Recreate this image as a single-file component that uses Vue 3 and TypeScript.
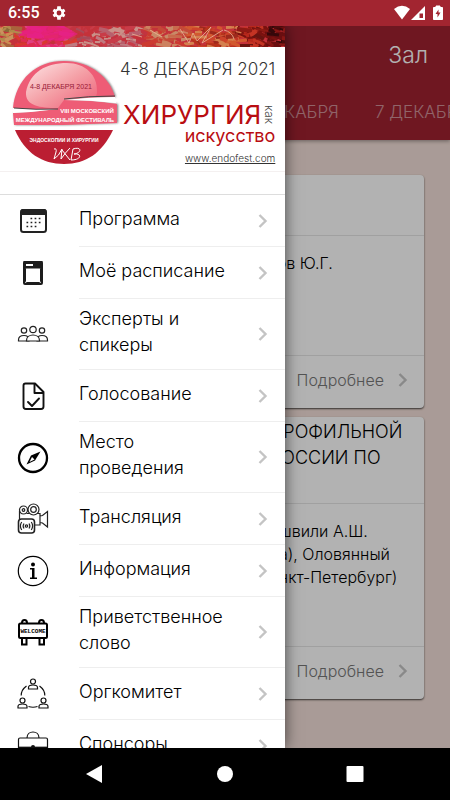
<script setup lang="ts">
interface MenuItem {
  title: string[]
  icon: string
}

interface Session {
  heading: string[]
  speakers: string[]
}

const menu: MenuItem[] = [
  {
    title: ['Программа'],
    icon: `<rect x="4" y="5" width="25" height="22" rx="2.5" fill="#fff" stroke="#222" stroke-width="2"/><path d="M3.500 5.500q0-1.500 2-1.500h22q2 0 2 1.500V10h-26z" fill="#222"/><path d="M13.500 13.500h11M9.500 17.500h15M9.500 21.500h11" stroke="#222" stroke-width="1.700" stroke-dasharray="1.700 2.400" fill="none"/>`,
  },
  {
    title: ['Моё расписание'],
    icon: `<rect x="7" y="5" width="18" height="22" rx="1" fill="#fff" stroke="#1c1c1c" stroke-width="2"/><path d="M6.500 4h19v8.500h-19z" fill="#1c1c1c"/><path d="M9 7h7v2H9z" fill="#fff"/><rect x="8.500" y="11" width="15" height="14.500" rx="1" fill="#fff" stroke="#1c1c1c"/>`,
  },
  {
    title: ['Эксперты и', 'спикеры'],
    icon: `<g fill="#fff" stroke="#222" stroke-width="1.200"><circle cx="7" cy="11.500" r="2.700"/><circle cx="25" cy="11.500" r="2.700"/><path d="M1.500 22v-1c0-3 2.500-4.500 5.500-4.500s5 1.500 5 4.500v1zM20 22v-1c0-3 2-4.500 5-4.500s5.500 1.500 5.500 4.500v1z"/><circle cx="16" cy="10.500" r="3.200"/><path d="M9.500 22v-.5c0-3.500 3-5.500 6.500-5.500s6.500 2 6.500 5.500v.5z"/></g>`,
  },
  {
    title: ['Голосование'],
    icon: `<g fill="none" stroke="#111" stroke-width="1.900" stroke-linejoin="round" stroke-linecap="round"><path d="M8.500 3.500H18l8.500 8.500v14.500a2.500 2.500 0 0 1-2.500 2.500H9a2.500 2.500 0 0 1-2.500-2.500v-21a2 2 0 0 1 2-2z"/><path d="M17.500 4v9H26M11 22l4 4 7-7.500"/></g>`,
  },
  {
    title: ['Место', 'проведения'],
    icon: `<circle cx="16" cy="16" r="14" fill="#fff" stroke="#000" stroke-width="2.300"/><path d="M23.500 9.500 18 18.500 9.500 22.500 14 13.500z" fill="#000"/><path d="m15 15 2.500 2.500-5 2.500z" fill="#fff"/>`,
  },
  {
    title: ['Трансляция'],
    icon: `<g fill="none" stroke="#222" stroke-width="1.200"><circle cx="6.500" cy="7" r="4"/><circle cx="6.500" cy="7" r="1.300"/><circle cx="16.500" cy="6.500" r="5.500"/><circle cx="16.500" cy="6.500" r="2.800"/><path d="M2.500 8v8M9.500 10.500h3M20 10.500h3V22h-5M23 13l2.500-.5 5-4V24l-5-4-2.500-.5"/><rect x="1.500" y="16" width="16" height="14" rx="3" fill="#fff" stroke-width="1.600"/><circle cx="9.500" cy="23" r="1.200"/><path d="M7 20.500q-1.700 2.500 0 5M12 20.500q1.700 2.500 0 5M4.700 19q-2.600 4 0 8M14.300 19q2.600 4 0 8"/></g>`,
  },
  {
    title: ['Информация'],
    icon: `<circle cx="16" cy="16" r="14.700" fill="#fff" stroke="#000" stroke-width="1.200"/><circle cx="16" cy="9.500" r="2" fill="#000"/><path d="M13 13h4.500v9.500H20V24h-7v-1.500h2V14.500h-2z" fill="#000"/>`,
  },
  {
    title: ['Приветственное', 'слово'],
    icon: `<g fill="none" stroke="#000" stroke-width="2"><path d="M5 6c0-4 5-4 5 0M22 6c0-4 5-4 5 0" /><rect x="2" y="6.500" width="28" height="14.500" rx="1.500"/><path d="M5 21v6.500h4.500V21M22.500 21v6.500H27V21"/></g><text x="16" y="16" font-size="6" font-weight="bold" font-family="Liberation Mono, monospace" text-anchor="middle" fill="#000">WELCOME</text>`,
  },
  {
    title: ['Оргкомитет'],
    icon: `<g fill="none" stroke="#111" stroke-width="1.200"><circle cx="16" cy="3.500" r="2.500"/><path d="M11.500 11V9.500c0-2 2-2.500 4.500-2.500s4.500.5 4.500 2.500V11z"/><circle cx="5.500" cy="22.500" r="2.500"/><path d="M1 30v-1.500C1 26.500 3 26 5.500 26s4.500.5 4.500 2.500V30z"/><circle cx="26.500" cy="22.500" r="2.500"/><path d="M22 30v-1.500c0-2 2-2.500 4.500-2.500s4.500.5 4.500 2.500V30z"/><path d="M9.500 8C6 10.500 4.200 14 4.200 17.500M22.500 8c3.500 2.500 5.300 6 5.300 9.500M11.500 28.500q4.500 1.500 9 0"/></g>`,
  },
  {
    title: ['Спонсоры'],
    icon: `<g fill="none" stroke="#111" stroke-width="1.200"><path d="M10 8c0-8 12-8 12 0"/><rect x="1.500" y="8" width="29" height="20" rx="1.500"/><path d="M1.500 17.500h29" stroke-width="1.700"/></g><circle cx="16" cy="17" r="2" fill="#111"/>`,
  },
]

const sessions: Session[] = [
  { heading: [], speakers: ['тов Ю.Г.'] },
  {
    heading: ['ПРОФИЛЬНОЙ', 'РОССИИ ПО'],
    speakers: ['ашвили А.Ш.', 'ва), Оловянный', 'анкт-Петербург)'],
  },
]

const days: string[] = ['6 ДЕКАБРЯ', '7 ДЕКАБРЯ']

interface Stroke {
  d: string
  color: string
  width: number
}

// Brush strokes of the painted strip: each zone has its own palette.
const zones: { until: number; colors: string[] }[] = [
  { until: 20, colors: ['#b08a4c', '#8a6a38', '#c9935e', '#a8643c', '#d08a50'] },
  { until: 70, colors: ['#e22a80', '#e22a6a', '#dd2c50', '#d8392f', '#e04080'] },
  { until: 145, colors: ['#b8606c', '#c07a80', '#c83c48', '#a84a58', '#c99088', '#c23440'] },
  { until: 190, colors: ['#c86a4c', '#cd8260', '#c44a38', '#c88a68', '#cc3a30'] },
  { until: 240, colors: ['#cc432a', '#d2592f', '#b8331c', '#d4814f', '#9e2a1c'] },
  { until: 270, colors: ['#8e1a14', '#b8281c', '#6a1410', '#c43424', '#7a120f'] },
  { until: 286, colors: ['#4a0c0c', '#8a1614', '#35080a', '#6a0e10'] },
]

function paint(): Stroke[] {
  const result: Stroke[] = []
  let seed = 17
  const next = (): number => {
    seed = (seed * 16807) % 2147483647
    return seed / 2147483647
  }
  for (let i = 0; i < 420; i++) {
    const x = Math.round(next() * 290)
    const y = Math.round(next() * 22)
    const zone = zones.find((z) => x < z.until) ?? zones[zones.length - 1]
    const color = zone.colors[Math.floor(next() * zone.colors.length)]
    const dx = Math.round(4 + next() * 11)
    const dy = Math.round((next() - 0.45) * 12)
    result.push({
      d: `M${x - 6} ${y}q${Math.round(dx / 2)} ${Math.round(dy / 4)} ${dx} ${dy}`,
      color,
      width: 2 + Math.round(next() * 2),
    })
  }
  return result
}

const strokes = paint()
</script>

<template>
  <div class="screen">
    <header class="status">
      <span class="clock">6:55</span>
      <svg class="gear" viewBox="0 0 24 24" aria-hidden="true">
        <path fill="#fff" fill-rule="evenodd" d="M19.400 13c.1-.7.1-1.300 0-2l2.200-1.700-2.200-3.800-2.700 1.100-1.700-1L14.600 2H9.400L9 5.600l-1.700 1-2.700-1.100-2.200 3.800L4.600 11v2l-2.200 1.700 2.200 3.800 2.700-1.100 1.700 1 .4 3.600h5.200l.4-3.600 1.700-1 2.700 1.100 2.200-3.800zM12 15.600a3.600 3.600 0 1 1 0-7.200 3.600 3.600 0 0 1 0 7.200z" />
      </svg>
      <svg class="signals" viewBox="0 0 50 16" aria-hidden="true">
        <path d="M0 4q8-6.500 16 0L8 14.500z" fill="#fff" />
        <path d="M31 1v14H17z" fill="#fff" />
        <path d="M25.500 8.500h3.500V13h-3.500z" fill="#a22530" />
        <path d="M39.500 2.500h2.500V1h4v1.500h2.500v12h-9z" fill="#fff" stroke="#fff" stroke-linejoin="round" />
        <path d="M44.500 4.500v3h2l-3 5V9h-2z" fill="#a22530" />
      </svg>
    </header>

    <div class="stage">
      <main class="page">
        <div class="appbar">
          <h1 class="hall">Зал</h1>
          <div class="tabs">
            <button v-for="day in days" :key="day" type="button" class="tab">{{ day }}</button>
          </div>
        </div>
        <div class="sessions">
          <article v-for="(session, i) in sessions" :key="i" class="card">
            <h2 class="card-head">
              <span v-for="line in session.heading" :key="line">{{ line }}</span>
            </h2>
            <p class="card-body">
              <span v-for="line in session.speakers" :key="line">{{ line }}</span>
            </p>
            <a href="#" class="more">
              Подробнее
              <svg class="chevron" viewBox="0 0 10 16" aria-hidden="true"><path d="m1.500 2 6 6-6 6" /></svg>
            </a>
          </article>
        </div>
      </main>

      <div class="shade"></div>

      <aside class="drawer">
        <svg class="painting" viewBox="0 0 285 21" preserveAspectRatio="xMidYMid slice" aria-hidden="true">
          <rect width="285" height="21" fill="#c4323a" />
          <path v-for="(s, i) in strokes" :key="i" :d="s.d" :stroke="s.color" :stroke-width="s.width" fill="none" />
          <path d="M18 9 30 0h34l14 8-14 7-22-1z" fill="#e81e86" opacity=".7" />
          <path d="m180 3 9 14 4-10 4 8 14-14-9 16 21-13M224 4q8 2 10 9M132 8l10 3M150 4l12 7" stroke="#e8b898" opacity=".8" fill="none" />
        </svg>

        <div class="banner">
          <svg class="badge" viewBox="0 0 110 110" aria-hidden="true">
            <defs>
              <linearGradient id="badge-sheen" x1="0" y1="0" x2="1" y2="1">
                <stop offset="0" stop-color="#fff4f2" />
                <stop offset=".5" stop-color="#f5a8ac" />
                <stop offset="1" stop-color="#ee5c76" />
              </linearGradient>
              <filter id="badge-shadow" x="-10%" y="-10%" width="120%" height="120%">
                <feDropShadow dx="1" dy="0" stdDeviation="1" flood-color="#555" flood-opacity=".8" />
              </filter>
            </defs>
            <g filter="url(#badge-shadow)">
              <path d="M3 50C6 21 26 3 54 3c27 0 46 17 51 36q-25 0-51 3l20 2-26 7Q25 52 3 50zM3 55q22-1 45-4l6-9q26 0 53 4v19q-28 1-54 2H4z" fill="#ee5c76" />
            </g>
            <path d="M16 34C20 14 36 5 57 5c18 0 31 12 30 29 0 3-1 4-2 5q-15 1-31 3l-6 8c-18 0-33-2-32-16z" fill="url(#badge-sheen)" opacity=".9" />
            <path d="M54 42q26-3 51-3l1 6q-26-3-52-3zM3 50q22 2 45 1-23 3-45 4z" fill="#fff" />
            <path d="M54 41q24-3 51-3M4 50q22 2 44 1" stroke="#444" fill="none" />
            <path d="M5 72h98C92 95 76 106 54 106S15 95 5 72z" fill="#bb1e32" />
            <g class="badge-text">
              <text x="51" y="31" font-size="7" fill="#972038">4-8 ДЕКАБРЯ 2021</text>
              <text x="77" y="55" font-size="6" font-weight="bold" fill="#fff">VIII МОСКОВСКИЙ</text>
              <text x="55" y="64" font-size="6" font-weight="bold" fill="#fff">МЕЖДУНАРОДНЫЙ ФЕСТИВАЛЬ</text>
              <text x="54" y="84" font-size="5" font-weight="bold" fill="#fff">ЭНДОСКОПИИ И ХИРУРГИИ</text>
            </g>
            <path d="M44 91q3-1 2 3l-2 7q5-3 8-10l-1 10q4-6 9-11m-8 2 8 10M61 102l2-11c9-3 9 4 1 5 8-1 8 6-3 6" fill="none" stroke="#fff" />
          </svg>
          <div class="titles">
            <p class="dates">4-8 ДЕКАБРЯ 2021</p>
            <div class="name">
              <strong class="surgery">ХИРУРГИЯ</strong>
              <span class="as">как</span>
            </div>
            <p class="art">искусство</p>
            <a href="#" class="site">www.endofest.com</a>
          </div>
        </div>

        <nav class="menu">
          <a v-for="item in menu" :key="item.title[0]" href="#" class="item">
            <svg class="icon" viewBox="0 0 32 32" aria-hidden="true" v-html="item.icon"></svg>
            <span class="row" :class="{ tall: item.title.length > 1 }">
              <span class="label">
                <span v-for="line in item.title" :key="line">{{ line }}</span>
              </span>
              <svg class="chevron" viewBox="0 0 10 16" aria-hidden="true"><path d="m1.500 2 6 6-6 6" /></svg>
            </span>
          </a>
        </nav>
      </aside>
    </div>

    <footer class="system">
      <button type="button" aria-label="Назад">
        <svg viewBox="0 0 18 18"><path d="M16 0v18L0 9z" fill="#fff" /></svg>
      </button>
      <button type="button" aria-label="Домой">
        <svg viewBox="0 0 18 18"><circle cx="9" cy="9" r="8" fill="#fff" /></svg>
      </button>
      <button type="button" aria-label="Обзор">
        <svg viewBox="0 0 18 18"><rect x="0.500" y="1" width="17" height="16" rx="1" fill="#fff" /></svg>
      </button>
    </footer>
  </div>
</template>

<style>
body {
  margin: 0;
}
</style>

<style scoped>
.screen {
  display: flex;
  flex-direction: column;
  height: 100vh;
  overflow: hidden;
  font-family: Inter, "Open Sans", sans-serif;
  font-weight: 300;
  color: #000;
}

p,
h1,
h2 {
  margin: 0;
  font-weight: 300;
}

a {
  color: inherit;
  text-decoration: none;
}

button {
  padding: 0;
  border: 0;
  background: none;
  font: inherit;
}

.status {
  display: flex;
  align-items: center;
  flex: none;
  height: 26px;
  padding: 0 6px 0 8px;
  background: #a22530;
}

.clock {
  font: 500 16px/26px Roboto, sans-serif;
  color: #fff;
}

.gear {
  width: 16px;
  height: 16px;
  margin-left: 11px;
}

.signals {
  width: 50px;
  height: 16px;
  margin-left: auto;
}

.stage {
  position: relative;
  flex: 1;
  min-height: 0;
  overflow: hidden;
}

.page {
  height: 100%;
  overflow: hidden;
  background: #f3dfd8;
}

.appbar {
  height: 114px;
  overflow: hidden;
  background: #a02230;
  box-shadow: 0 1px 4px rgba(0, 0, 0, 0.4);
}

.hall {
  padding-right: 22px;
  font-size: 23px;
  line-height: 58px;
  text-align: right;
  color: #fff;
}

.tabs {
  display: flex;
  gap: 36px;
  padding-left: 245px;
}

.tab {
  flex: none;
  font-size: 17px;
  line-height: 56px;
  color: rgba(255, 255, 255, 0.5);
}

.sessions {
  display: flex;
  flex-direction: column;
  gap: 9px;
  padding: 35px 26px;
}

.card {
  border-radius: 4px;
  background: #fff;
  box-shadow: 0 1px 2px rgba(0, 0, 0, 0.7);
}

.card-head {
  box-sizing: border-box;
  min-height: 61px;
  padding: 2px 0 32px 244px;
  border-bottom: 1px solid #e6e6e6;
  font-size: 18px;
  line-height: 26px;
}

.card-head span,
.card-body span,
.label span {
  display: block;
}

.card-body {
  box-sizing: border-box;
  min-height: 120px;
  padding: 16px 0 57px 244px;
  border-bottom: 1px solid #e6e6e6;
  font-size: 16px;
  line-height: 23px;
}

.more {
  display: flex;
  align-items: center;
  justify-content: flex-end;
  gap: 14px;
  height: 48px;
  padding: 0 16px 4px 0;
  font-size: 16px;
  color: #777;
}

.chevron {
  flex: none;
  width: 10px;
  height: 16px;
  fill: none;
  stroke: #c4c4c4;
  stroke-width: 2.4;
}

.shade {
  position: absolute;
  inset: 0;
  background: rgba(0, 0, 0, 0.3);
}

.drawer {
  position: absolute;
  top: 0;
  bottom: 0;
  left: 0;
  width: 285px;
  overflow: hidden;
  background: #fff;
  box-shadow: 0 0 14px rgba(0, 0, 0, 0.6);
}

.painting {
  display: block;
  width: 100%;
  height: 21px;
}

.banner {
  display: flex;
  justify-content: space-between;
  height: 124px;
  margin-bottom: 22px;
  padding-right: 11px;
  border-bottom: 1px solid #f4f0f0;
}

.badge {
  flex: none;
  width: 110px;
  height: 110px;
  margin: 11px 0 0 10px;
}

.badge-text {
  font-family: "Liberation Sans", sans-serif;
  text-anchor: middle;
}

.titles {
  display: flex;
  flex-direction: column;
  align-items: flex-end;
  padding-top: 10px;
}

.dates {
  font-size: 17px;
  line-height: 24px;
  white-space: nowrap;
  color: #333;
}

.name {
  display: flex;
  align-items: center;
  gap: 2px;
  padding-top: 21px;
}

.surgery {
  font-size: 26px;
  line-height: 26px;
  font-weight: 400;
  color: #b90d12;
}

.as {
  writing-mode: vertical-rl;
  font-size: 12px;
  line-height: 12px;
  color: #444;
}

.art {
  font-size: 18px;
  line-height: 16px;
  font-weight: 400;
  color: #b90d12;
}

.site {
  padding-top: 7px;
  font-size: 10px;
  line-height: 14px;
  text-decoration: underline;
  color: #333;
}

.menu {
  border-top: 1px solid #ddd;
}

.item {
  display: flex;
  align-items: center;
  gap: 30px;
  padding-left: 17px;
}

.icon {
  flex: none;
  width: 32px;
  height: 32px;
}

.row {
  display: flex;
  flex: 1;
  align-items: center;
  justify-content: space-between;
  box-sizing: border-box;
  height: 52px;
  padding-right: 17px;
  border-bottom: 1px solid #eee;
}

.row.tall {
  height: 71px;
}

.label {
  padding-bottom: 4px;
  font-size: 18px;
  line-height: 26px;
}

.system {
  display: flex;
  flex: none;
  justify-content: center;
  height: 52px;
  background: #000;
}

.system button {
  display: flex;
  align-items: center;
  justify-content: center;
  width: 130px;
}

.system svg {
  width: 18px;
  height: 18px;
}
</style>
